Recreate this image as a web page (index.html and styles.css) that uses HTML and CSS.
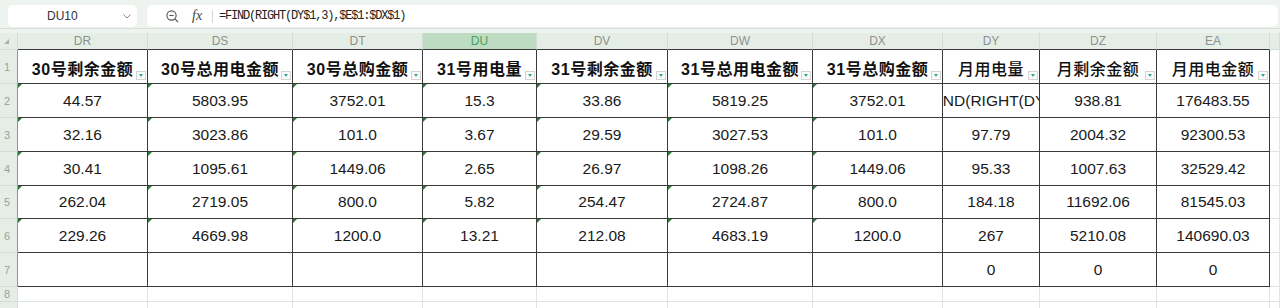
FILE: index.html
```html
<!DOCTYPE html>
<html lang="zh-CN">
<head>
<meta charset="utf-8">
<title>Sheet</title>
<link rel="stylesheet" href="styles.css">
</head>
<body>
<div class="toolbar">
  <div class="namebox">
    <span class="ref">DU10</span>
    <svg class="chev" width="8" height="5" viewBox="0 0 8 5"><polyline points="0.5,0.5 4,4 7.5,0.5" fill="none" stroke="#888" stroke-width="1"/></svg>
  </div>
  <div class="fbar">
    <svg class="zoomicon" width="13" height="13" viewBox="0 0 13 13"><circle cx="5.5" cy="5.5" r="4.6" fill="none" stroke="#555" stroke-width="1.1"/><line x1="3.3" y1="5.5" x2="7.7" y2="5.5" stroke="#555" stroke-width="1.1"/><line x1="8.9" y1="8.9" x2="12" y2="12" stroke="#555" stroke-width="1.2"/></svg>
    <span class="fx">fx</span>
    <span class="sep"></span>
    <span class="formula">=FIND(RIGHT(DY$1,3),$E$1:$DX$1)</span>
  </div>
</div>
<div class="sheet">
  <div class="corner"><span class="ctri"></span></div>
  <div class="ch">DR</div><div class="ch">DS</div><div class="ch">DT</div><div class="ch sel">DU</div><div class="ch">DV</div><div class="ch">DW</div><div class="ch">DX</div><div class="ch">DY</div><div class="ch">DZ</div><div class="ch">EA</div><div class="ch out"></div>

  <div class="rh in">1</div>
  <div class="c hd b">30号剩余金额<span class="filter"></span></div>
  <div class="c hd b">30号总用电金额<span class="filter"></span></div>
  <div class="c hd b">30号总购金额<span class="filter"></span></div>
  <div class="c hd b">31号用电量<span class="filter"></span></div>
  <div class="c hd b">31号剩余金额<span class="filter"></span></div>
  <div class="c hd b">31号总用电金额<span class="filter"></span></div>
  <div class="c hd b">31号总购金额<span class="filter"></span></div>
  <div class="c hd">月用电量<span class="filter"></span></div>
  <div class="c hd">月剩余金额<span class="filter"></span></div>
  <div class="c hd">月用电金额<span class="filter"></span></div>
  <div class="e"></div>

  <div class="rh in">2</div>
  <div class="c t">44.57</div><div class="c t">5803.95</div><div class="c t">3752.01</div><div class="c t">15.3</div><div class="c t">33.86</div><div class="c t">5819.25</div><div class="c t">3752.01</div>
  <div class="c clip"><span>=FIND(RIGHT(DY$1,3),$E$1:$DX$1)</span></div><div class="c">938.81</div><div class="c">176483.55</div>
  <div class="e"></div>

  <div class="rh in">3</div>
  <div class="c t">32.16</div><div class="c t">3023.86</div><div class="c t">101.0</div><div class="c t">3.67</div><div class="c t">29.59</div><div class="c t">3027.53</div><div class="c t">101.0</div>
  <div class="c">97.79</div><div class="c">2004.32</div><div class="c">92300.53</div>
  <div class="e"></div>

  <div class="rh in">4</div>
  <div class="c t">30.41</div><div class="c t">1095.61</div><div class="c t">1449.06</div><div class="c t">2.65</div><div class="c t">26.97</div><div class="c t">1098.26</div><div class="c t">1449.06</div>
  <div class="c">95.33</div><div class="c">1007.63</div><div class="c">32529.42</div>
  <div class="e"></div>

  <div class="rh in">5</div>
  <div class="c t">262.04</div><div class="c t">2719.05</div><div class="c t">800.0</div><div class="c t">5.82</div><div class="c t">254.47</div><div class="c t">2724.87</div><div class="c t">800.0</div>
  <div class="c">184.18</div><div class="c">11692.06</div><div class="c">81545.03</div>
  <div class="e"></div>

  <div class="rh in">6</div>
  <div class="c t">229.26</div><div class="c t">4669.98</div><div class="c t">1200.0</div><div class="c t">13.21</div><div class="c t">212.08</div><div class="c t">4683.19</div><div class="c t">1200.0</div>
  <div class="c">267</div><div class="c">5210.08</div><div class="c">140690.03</div>
  <div class="e"></div>

  <div class="rh in">7</div>
  <div class="c"></div><div class="c"></div><div class="c"></div><div class="c"></div><div class="c"></div><div class="c"></div><div class="c"></div>
  <div class="c">0</div><div class="c">0</div><div class="c">0</div>
  <div class="e"></div>

  <div class="rh">8</div>
  <div class="e"></div><div class="e"></div><div class="e"></div><div class="e"></div><div class="e"></div><div class="e"></div><div class="e"></div><div class="e"></div><div class="e"></div><div class="e"></div><div class="e"></div>

  <div class="rh">9</div>
  <div class="e"></div><div class="e"></div><div class="e"></div><div class="e"></div><div class="e"></div><div class="e"></div><div class="e"></div><div class="e"></div><div class="e"></div><div class="e"></div><div class="e"></div>
</div>
</body>
</html>
```
FILE: styles.css
```css
* { box-sizing: border-box; }

body {
  margin: 0;
  height: 308px;
  overflow: hidden;
  background: #eef3ef;
  font-family: "Liberation Sans", "Noto Sans CJK SC", sans-serif;
  color: #1a1a1a;
}

.toolbar {
  display: flex;
  align-items: flex-start;
  gap: 10px;
  height: 29px;
  padding: 5px 2px 0 8px;
  border-bottom: 1px solid #d7dfd8;
}

.namebox {
  width: 129px;
  height: 22px;
  background: #fff;
  border-radius: 5px;
  display: flex;
  align-items: center;
  padding-left: 39px;
  padding-right: 6px;
}

.ref {
  font-size: 12px;
  color: #333;
  flex: 1;
}

.chev { margin-top: 1px; }

.fbar {
  flex: 1;
  height: 22px;
  background: #fff;
  border-radius: 5px;
  display: flex;
  align-items: center;
  padding-left: 19px;
}

.zoomicon { flex: none; }

.fx {
  font-family: "Liberation Serif", serif;
  font-style: italic;
  font-size: 14px;
  color: #444;
  margin-left: 13px;
  margin-top: -1px;
}

.sep {
  width: 1px;
  height: 13px;
  background: #d5d5d5;
  margin-left: 10px;
}

.formula {
  font-family: "Liberation Mono", monospace;
  font-size: 12px;
  letter-spacing: -1.2px;
  color: #222;
  margin-left: 6px;
}

.sheet {
  margin-top: 4px;
  display: grid;
  grid-template-columns: 18px 130px 145px 130px 114px 131px 145px 130px 97px 117px 113px 1fr;
  grid-template-rows: 17px 34px 34px 34px 34px 33px 34px 34px 15px 20px;
}

.corner {
  background: #e5eee6;
  border-right: 1px solid #d3ddd4;
  border-bottom: 1px solid #d3ddd4;
  position: relative;
}

.ctri {
  position: absolute;
  left: 4px;
  top: 6px;
  width: 0;
  height: 0;
  border-bottom: 5px solid #a9b1aa;
  border-left: 5px solid transparent;
}

.ch {
  background: #e5eee6;
  border-right: 1px solid #d3ddd4;
  border-bottom: 1px solid #3a3a3a;
  font-size: 12px;
  color: #8d918e;
  display: flex;
  align-items: center;
  justify-content: center;
}

.ch.sel {
  background: #bddcc1;
  color: #4aa25a;
}

.ch.out { border-bottom-color: #d3ddd4; }

.rh {
  background: #e5eee6;
  border-right: 1px solid #d3ddd4;
  border-bottom: 1px solid #d3ddd4;
  font-size: 11px;
  color: #9aa09b;
  display: flex;
  align-items: center;
  padding-left: 4px;
}

.rh.in { border-right-color: #8e978f; }

.c {
  position: relative;
  background: #fff;
  border-right: 1px solid #3a3a3a;
  border-bottom: 1px solid #3a3a3a;
  display: flex;
  align-items: center;
  justify-content: center;
  font-size: 15.5px;
  white-space: nowrap;
}

.c.t::before {
  content: "";
  position: absolute;
  left: 0;
  top: 0;
  border-top: 4px solid #2a7a3a;
  border-right: 4px solid transparent;
}

.hd {
  font-size: 16px;
  font-weight: 500;
  padding-top: 2px;
  color: #111;
  letter-spacing: 0.5px;
}

.hd.b { font-weight: 700; }

.filter {
  position: absolute;
  right: 1px;
  bottom: 3px;
  width: 10px;
  height: 9px;
  background: #fafafa;
  border: 1px solid #d4d4d4;
  display: flex;
  align-items: center;
  justify-content: center;
}

.filter::after {
  content: "";
  border-top: 3px solid #3aa59b;
  border-left: 2.5px solid transparent;
  border-right: 2.5px solid transparent;
}

.clip {
  justify-content: flex-start;
  overflow: hidden;
}

.clip span { margin-left: -23px; }

.e {
  background: #fff;
  border-right: 1px solid #dde5de;
  border-bottom: 1px solid #dde5de;
}
```
